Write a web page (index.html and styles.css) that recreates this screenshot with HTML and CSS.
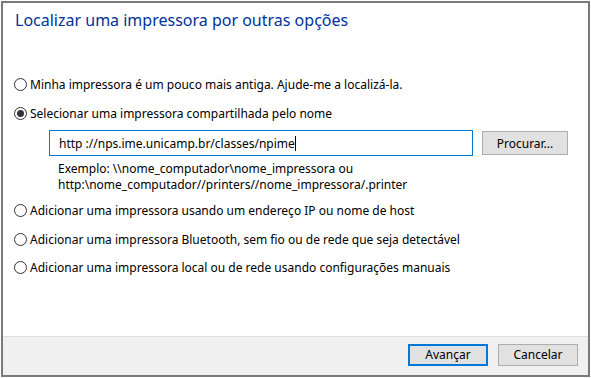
FILE: index.html
```html
<!DOCTYPE html>
<html lang="pt-BR">
<head>
<meta charset="utf-8">
<title>Adicionar impressora</title>
<link rel="stylesheet" href="styles.css">
</head>
<body>
<div class="window">
  <div class="content">
    <h1 class="title">Localizar uma impressora por outras opções</h1>
    <div class="options">
      <div class="row"><span class="radio"></span><span class="label">Minha impressora é um pouco mais antiga. Ajude-me a localizá-la.</span></div>
      <div class="row"><span class="radio checked"></span><span class="label">Selecionar uma impressora compartilhada pelo nome</span></div>
      <div class="shared">
        <div class="input-line">
          <div class="input"><span class="value">http ://nps.ime.unicamp.br/classes/npime</span><span class="caret"></span></div>
          <div class="btn browse">Procurar...</div>
        </div>
        <div class="example">
          <div class="ex-line">Exemplo: \\nome_computador\nome_impressora ou</div>
          <div class="ex-line">http:\nome_computador//printers//nome_impressora/.printer</div>
        </div>
      </div>
      <div class="row r3"><span class="radio"></span><span class="label">Adicionar uma impressora usando um endereço IP ou nome de host</span></div>
      <div class="row r4"><span class="radio"></span><span class="label">Adicionar uma impressora Bluetooth, sem fio ou de rede que seja detectável</span></div>
      <div class="row r5"><span class="radio"></span><span class="label">Adicionar uma impressora local ou de rede usando configurações manuais</span></div>
    </div>
  </div>
  <div class="footer">
    <div class="btn primary">Avançar</div>
    <div class="btn">Cancelar</div>
  </div>
</div>
</body>
</html>
```
FILE: styles.css
```css
html, body {
  margin: 0;
  padding: 0;
  background: #ffffff;
}
body {
  font-family: "Noto Sans", "Open Sans", sans-serif;
  font-size: 12px;
  color: #000000;
}
.window {
  box-sizing: border-box;
  margin: 1px;
  width: 589px;
  height: 376px;
  border: 2px solid #7a7a7a;
  display: flex;
  flex-direction: column;
  background: #ffffff;
}
.content {
  flex: 1;
  padding: 0 0 0 11px;
}
.title {
  margin: 6px 0 0 1px;
  font-size: 16px;
  font-weight: normal;
  line-height: 22px;
  color: #003399;
}
.options {
  margin-top: 39px;
}
.row {
  display: flex;
  align-items: center;
  height: 29px;
  gap: 3px;
}
.radio {
  box-sizing: border-box;
  width: 13px;
  height: 13px;
  border: 1px solid #333333;
  border-radius: 50%;
  display: flex;
  align-items: center;
  justify-content: center;
  flex: none;
}
.radio.checked::after {
  content: "";
  width: 7px;
  height: 7px;
  border-radius: 50%;
  background: #333333;
}
.label {
  line-height: 16px;
  white-space: nowrap;
}
.shared {
  padding-left: 35px;
}
.input-line {
  display: flex;
  align-items: center;
  gap: 9px;
  margin-top: 2px;
}
.input {
  box-sizing: border-box;
  width: 424px;
  height: 26px;
  border: 1px solid #0078d7;
  display: flex;
  align-items: center;
  padding-left: 9px;
}
.caret {
  display: inline-block;
  width: 1px;
  height: 15px;
  background: #000;
}
.btn {
  box-sizing: border-box;
  width: 86px;
  height: 24px;
  background: #e1e1e1;
  border: 1px solid #adadad;
  display: flex;
  align-items: center;
  justify-content: center;
}
.browse {
  width: 86px;
}
.example {
  margin: 5px 0 0 9px;
}
.ex-line {
  line-height: 16px;
  height: 16px;
  white-space: nowrap;
}
.r3 {
  margin-top: 3px;
}
.r5 {
  height: 27px;
}
.footer {
  height: 39px;
  box-sizing: border-box;
  border-top: 1px solid #dfdfdf;
  background: #f0f0f0;
  display: flex;
  justify-content: flex-end;
  align-items: center;
  gap: 10px;
  padding: 0 10px 3px 0;
}
.footer .btn {
  width: 80px;
  height: 22px;
}
.footer .btn.primary {
  border: 2px solid #0078d7;
  width: 80px;
}
```
